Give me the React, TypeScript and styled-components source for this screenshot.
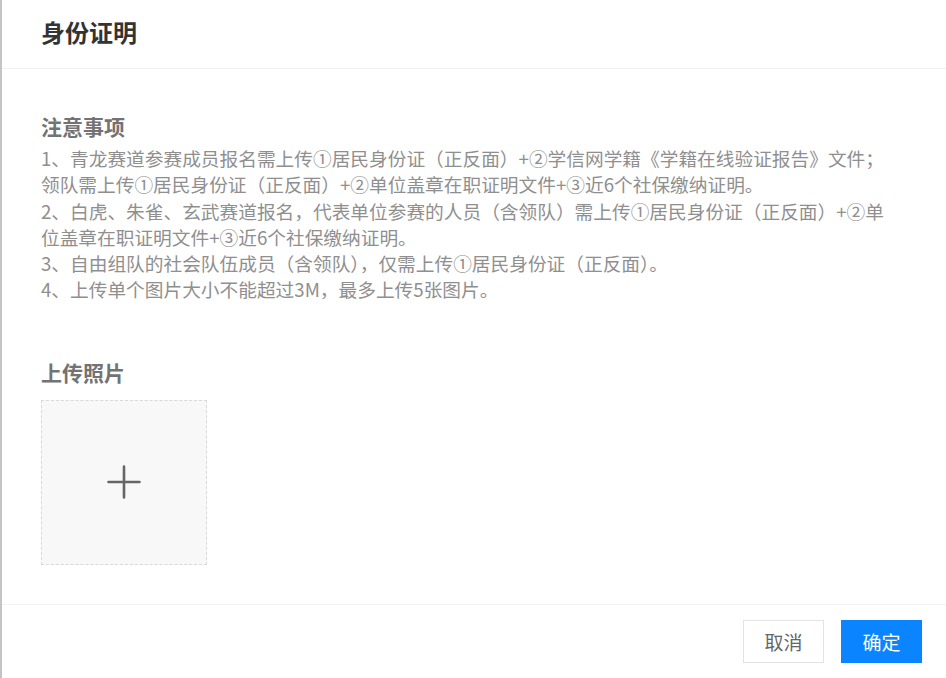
import React from "react"
import styled, { createGlobalStyle } from "styled-components"

const GlobalStyle = createGlobalStyle`
	html, body {
		margin: 0;
		padding: 0;
		background: #ffffff;
	}
	body {
		font-family: "Noto Sans CJK SC", "Noto Sans", sans-serif;
	}
`

const notes: string[][] = [
	[
		"1、青龙赛道参赛成员报名需上传①居民身份证（正反面）+②学信网学籍《学籍在线验证报告》文件；",
		"领队需上传①居民身份证（正反面）+②单位盖章在职证明文件+③近6个社保缴纳证明。",
	],
	[
		"2、白虎、朱雀、玄武赛道报名，代表单位参赛的人员（含领队）需上传①居民身份证（正反面）+②单",
		"位盖章在职证明文件+③近6个社保缴纳证明。",
	],
	["3、自由组队的社会队伍成员（含领队），仅需上传①居民身份证（正反面）。"],
	["4、上传单个图片大小不能超过3M，最多上传5张图片。"],
]

export default function App() {
	return (
		<>
			<GlobalStyle />
			<Dialog>
				<Header>
					<Title>身份证明</Title>
				</Header>
				<Body>
					<SectionTitle>注意事项</SectionTitle>
					<Notes>
						{notes.map((item, i) => (
							<NoteItem key={i}>
								{item.map((line, j) => (
									<NoteLine key={j}>{line}</NoteLine>
								))}
							</NoteItem>
						))}
					</Notes>
					<SectionTitle $top={54}>上传照片</SectionTitle>
					<UploadBox type='button' aria-label='上传照片'>
						<svg width='34' height='34' viewBox='0 0 34 34'>
							<path d='M17 1.5v31M1.5 17h31' stroke='#666' strokeWidth='2.6' strokeLinecap='round' fill='none' />
						</svg>
					</UploadBox>
				</Body>
				<Footer>
					<Button>取消</Button>
					<Button $primary>确定</Button>
				</Footer>
			</Dialog>
		</>
	)
}

const Dialog = styled.div`
	width: 946px;
	height: 678px;
	box-sizing: border-box;
	border-left: 2px solid #c4c4c4;
	background: #ffffff;
	display: flex;
	flex-direction: column;
	overflow: hidden;
`

const Header = styled.div`
	height: 69px;
	box-sizing: border-box;
	padding: 0 0 5px 39px;
	border-bottom: 1px solid #f0f0f0;
	display: flex;
	align-items: center;
`

const Title = styled.h1`
	margin: 0;
	font-size: 24px;
	line-height: 30px;
	font-weight: 700;
	color: #333333;
`

const Body = styled.div`
	flex: 1;
	padding: 42px 0 0 39px;
	display: flex;
	flex-direction: column;
	align-items: flex-start;
`

const SectionTitle = styled.h2<{ $top?: number }>`
	margin: ${(p) => p.$top ?? 0}px 0 0 0;
	font-size: 21px;
	line-height: 30px;
	font-weight: 700;
	color: #737373;
`

const Notes = styled.div`
	margin-top: 4px;
	display: flex;
	flex-direction: column;
`

const NoteItem = styled.p`
	margin: 0;
	display: flex;
	flex-direction: column;
`

const NoteLine = styled.span`
	font-size: 18.7px;
	line-height: 26.3px;
	color: #8f8f8f;
	white-space: nowrap;
`

const UploadBox = styled.button`
	margin-top: 13px;
	width: 166px;
	height: 165px;
	box-sizing: border-box;
	border: 1px dashed #d9d9d9;
	background: #f8f8f8;
	display: flex;
	align-items: center;
	justify-content: center;
	padding: 0;
	cursor: pointer;
`

const Footer = styled.div`
	height: 74px;
	box-sizing: border-box;
	border-top: 1px solid #f3f3f3;
	padding: 15px 24px 0 0;
	display: flex;
	justify-content: flex-end;
	align-items: flex-start;
	gap: 17px;
`

const Button = styled.button<{ $primary?: boolean }>`
	width: 81px;
	height: 43px;
	box-sizing: border-box;
	border: 1px solid ${(p) => (p.$primary ? "#0a84ff" : "#e3e3e3")};
	background: ${(p) => (p.$primary ? "#0a84ff" : "#ffffff")};
	color: ${(p) => (p.$primary ? "#ffffff" : "#666666")};
	font-family: "Noto Sans CJK SC", "Noto Sans", sans-serif;
	font-size: 19px;
	line-height: 1;
	padding: 0;
	cursor: pointer;
`
